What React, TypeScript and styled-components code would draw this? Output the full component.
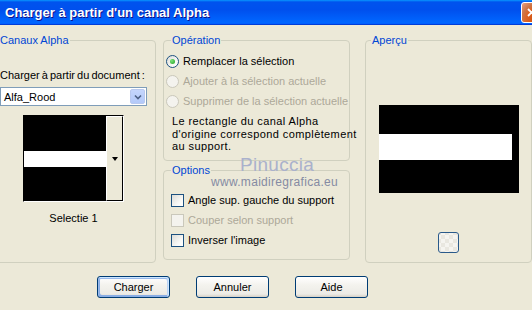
import styled, { createGlobalStyle } from "styled-components";

const GlobalStyle = createGlobalStyle`
  html, body {
    margin: 0;
    padding: 0;
    background: #ece9d8;
    overflow: hidden;
  }
  #root {
    width: 532px;
    height: 310px;
  }
`;

const Window = styled.div`
  position: relative;
  width: 532px;
  height: 310px;
  overflow: hidden;
  background: #ece9d8;
  font-family: "Liberation Sans", Arial, sans-serif;
  font-size: 11px;
  color: #000;
`;

const TitleBar = styled.div`
  height: 25px;
  display: flex;
  align-items: center;
  justify-content: space-between;
  padding-left: 5px;
  background: linear-gradient(
    180deg,
    #0997ff 0%,
    #0053ee 8%,
    #0050ee 40%,
    #0066ff 88%,
    #0066ff 93%,
    #005bff 95%,
    #003dd7 96%,
    #003dd7 100%
  );
`;

const Title = styled.span`
  font-family: "Liberation Sans", Arial, sans-serif;
  font-weight: bold;
  font-size: 13px;
  color: #fff;
  text-shadow: 1px 1px #0f1089;
`;

const CloseButton = styled.div`
  width: 21px;
  height: 21px;
  box-sizing: border-box;
  margin-right: -10px;
  border: 1px solid #fff;
  border-radius: 3px;
  background: radial-gradient(circle at 90% 90%, #cc4600 0%, #dc6527 55%, #cd7546 70%, #e8a084 100%);
  display: flex;
  align-items: center;
  justify-content: center;
`;

const Body = styled.div`
  padding-top: 9px;
`;

const Panels = styled.div`
  display: flex;
  height: 229px;
`;

const Group = styled.fieldset<{ $width: number }>`
  margin: 0;
  min-width: 0;
  width: ${(p) => p.$width}px;
  box-sizing: border-box;
  border: 1px solid #d0d0bf;
  border-radius: 4px;
  padding: 0;
`;

const Legend = styled.legend<{ $offset: number }>`
  color: #0046d5;
  padding: 0 1px;
  margin-left: ${(p) => p.$offset}px;
  line-height: 13px;
`;

const LeftGroup = styled(Group)`
  margin-left: -8px;
  padding: 22px 8px 0 7px;
`;

const DocLabel = styled.div`
  line-height: 13px;
  white-space: nowrap;
  word-spacing: -1px;
`;

const Combo = styled.div`
  margin-top: 5px;
  height: 19px;
  box-sizing: border-box;
  border: 1px solid #7f9db9;
  background: #fff;
  display: flex;
  align-items: center;
  justify-content: space-between;
  padding: 1px;
`;

const ComboText = styled.span`
  padding-left: 2px;
  font-size: 11px;
`;

const ComboButton = styled.div`
  width: 15px;
  height: 15px;
  box-sizing: border-box;
  border: 1px solid #b9c9ef;
  border-radius: 2px;
  background: linear-gradient(180deg, #c5d6fc 0%, #b3c9f9 100%);
  display: flex;
  align-items: center;
  justify-content: center;
`;

const Thumb = styled.div`
  margin: 9px auto 0;
  width: 101px;
  height: 87px;
  box-sizing: border-box;
  display: flex;
  border: 1px solid;
  border-color: #000 #fff #fff #000;
`;

const ThumbImage = styled.div`
  flex: 1;
  background: linear-gradient(
    180deg,
    #000 0,
    #000 35px,
    #fff 35px,
    #fff 51px,
    #000 51px,
    #000 100%
  );
`;

const ThumbStrip = styled.div`
  width: 17px;
  box-sizing: border-box;
  background: #ece9d8;
  border-left: 1px solid #fff;
  border-right: 1px solid #000;
  border-bottom: 1px solid #000;
  border-top: 1px solid #fff;
  display: flex;
  align-items: center;
  justify-content: center;
`;

const Arrow = styled.div`
  width: 0;
  height: 0;
  border-left: 3.5px solid transparent;
  border-right: 3.5px solid transparent;
  border-top: 4px solid #000;
`;

const Caption = styled.div`
  margin-top: 10px;
  text-align: center;
  line-height: 13px;
`;

const MiddleCol = styled.div`
  margin-left: 7px;
  width: 187px;
  display: flex;
  flex-direction: column;
  gap: 3px;
`;

const OperationGroup = styled(Group)`
  height: 127px;
  padding: 4px 0 0 2px;
`;

const OptionsGroup = styled(Group)`
  height: 96px;
  padding: 13px 0 0 7px;
`;

const OptionRow = styled.label<{ $disabled?: boolean }>`
  display: flex;
  align-items: center;
  gap: 4px;
  height: 20px;
  color: ${(p) => (p.$disabled ? "#aca899" : "#000")};
  white-space: nowrap;
`;

const Radio = styled.span<{ $checked?: boolean; $disabled?: boolean }>`
  width: 13px;
  height: 13px;
  box-sizing: border-box;
  border-radius: 50%;
  border: 1px solid ${(p) => (p.$disabled ? "#cac8bb" : "#1c5180")};
  background: ${(p) =>
    p.$disabled
      ? "#f4f3ee"
      : "linear-gradient(135deg, #dcdcd7 0%, #fbfbf9 70%, #fff 100%)"};
  display: flex;
  align-items: center;
  justify-content: center;

  &::after {
    content: "";
    display: ${(p) => (p.$checked ? "block" : "none")};
    width: 5px;
    height: 5px;
    border-radius: 50%;
    background: radial-gradient(circle at 35% 35%, #7ce37c, #21a121);
  }
`;

const Check = styled.span<{ $disabled?: boolean }>`
  width: 13px;
  height: 13px;
  box-sizing: border-box;
  border: 1px solid ${(p) => (p.$disabled ? "#cac8bb" : "#1c5180")};
  background: ${(p) =>
    p.$disabled
      ? "#f4f3ee"
      : "linear-gradient(135deg, #dcdcd7 0%, #fbfbf9 70%, #fff 100%)"};
`;

const Note = styled.p`
  margin: 4px 0 0 6px;
  line-height: 12.5px;
  letter-spacing: 0.4px;
  white-space: nowrap;
`;

const PreviewGroup = styled(Group)`
  margin-left: 15px;
  padding: 58px 0 0;
  display: flex;
  flex-direction: column;
  align-items: center;
`;

const PreviewImage = styled.div`
  width: 140px;
  height: 88px;
  background: #000;
  display: flex;
  flex-direction: column;
  justify-content: center;
`;

const PreviewBand = styled.div`
  margin: 29px 7px 33px 0;
  height: 26px;
  background: #fff;
`;

const SmallButton = styled.div`
  margin-top: 39px;
  width: 21px;
  height: 21px;
  box-sizing: border-box;
  border: 1px solid #2a5a8a;
  border-radius: 3px;
  background:
    repeating-conic-gradient(#f5f4f0 0% 25%, #e9e7e0 0% 50%) 2px 2px / 8px 8px,
    #fff;
`;

const ButtonRow = styled.div`
  display: flex;
  gap: 26px;
  padding-left: 97px;
  margin-top: 13px;
`;

const Button = styled.button<{ $default?: boolean }>`
  width: 73px;
  height: 22px;
  box-sizing: border-box;
  padding: 0;
  font-family: "Liberation Sans", Arial, sans-serif;
  font-size: 11px;
  color: #000;
  border: 1px solid #003c74;
  border-radius: 3px;
  background: linear-gradient(180deg, #fff 0%, #f4f3ee 40%, #ecebe6 85%, #d6d0c5 100%);
  box-shadow: ${(p) =>
    p.$default
      ? "inset -1px 1px #cee7ff, inset 1px 2px #98b8ea, inset -2px 2px #bcd4f6, inset 1px -1px #89ade4, inset 2px -2px #89ade4"
      : "none"};
`;

const Watermark = styled.div`
  position: absolute;
  left: 211px;
  top: 155px;
  pointer-events: none;
`;

const WatermarkName = styled.div`
  margin-left: 29px;
  font-family: "Liberation Sans", Arial, sans-serif;
  font-size: 19px;
  line-height: 19px;
  color: #aab1cc;
  letter-spacing: 0.3px;
`;

const WatermarkUrl = styled.div`
  margin-top: 1px;
  font-family: "Liberation Sans", Arial, sans-serif;
  font-size: 12px;
  line-height: 14px;
  color: #858ba3;
  letter-spacing: 0.3px;
`;

export default function App() {
  return (
    <>
      <GlobalStyle />
      <Window>
        <TitleBar>
          <Title>Charger à partir d'un canal Alpha</Title>
          <CloseButton>
            <svg width="9" height="9" viewBox="0 0 9 9">
              <path d="M1 1 L8 8 M8 1 L1 8" stroke="#fff" strokeWidth="1.8" />
            </svg>
          </CloseButton>
        </TitleBar>
        <Body>
          <Panels>
            <LeftGroup $width={164}>
              <Legend $offset={-1}>Canaux Alpha</Legend>
              <DocLabel>Charger à partir du document :</DocLabel>
              <Combo>
                <ComboText>Alfa_Rood</ComboText>
                <ComboButton>
                  <svg width="8" height="6" viewBox="0 0 8 6">
                    <path d="M1 1.5 L4 4.5 L7 1.5" stroke="#4d6185" strokeWidth="1.6" fill="none" />
                  </svg>
                </ComboButton>
              </Combo>
              <Thumb>
                <ThumbImage />
                <ThumbStrip>
                  <Arrow />
                </ThumbStrip>
              </Thumb>
              <Caption>Selectie 1</Caption>
            </LeftGroup>
            <MiddleCol>
              <OperationGroup $width={187}>
                <Legend $offset={5}>Opération</Legend>
                <OptionRow>
                  <Radio $checked />
                  Remplacer la sélection
                </OptionRow>
                <OptionRow $disabled>
                  <Radio $disabled />
                  Ajouter à la sélection actuelle
                </OptionRow>
                <OptionRow $disabled>
                  <Radio $disabled />
                  Supprimer de la sélection actuelle
                </OptionRow>
                <Note>
                  Le rectangle du canal Alpha
                  <br />
                  d'origine correspond complètement
                  <br />
                  au support.
                </Note>
              </OperationGroup>
              <OptionsGroup $width={187}>
                <Legend $offset={0}>Options</Legend>
                <OptionRow>
                  <Check />
                  Angle sup. gauche du support
                </OptionRow>
                <OptionRow $disabled>
                  <Check $disabled />
                  Couper selon support
                </OptionRow>
                <OptionRow>
                  <Check />
                  Inverser l'image
                </OptionRow>
              </OptionsGroup>
            </MiddleCol>
            <PreviewGroup $width={167}>
              <Legend $offset={5}>Aperçu</Legend>
              <PreviewImage>
                <PreviewBand />
              </PreviewImage>
              <SmallButton />
            </PreviewGroup>
          </Panels>
          <ButtonRow>
            <Button $default>Charger</Button>
            <Button>Annuler</Button>
            <Button>Aide</Button>
          </ButtonRow>
        </Body>
        <Watermark>
          <WatermarkName>Pinuccia</WatermarkName>
          <WatermarkUrl>www.maidiregrafica.eu</WatermarkUrl>
        </Watermark>
      </Window>
    </>
  );
}
